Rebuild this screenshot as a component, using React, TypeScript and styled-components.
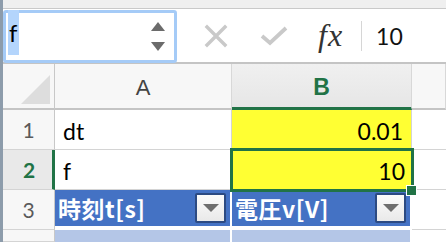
import React from "react";
import styled, { createGlobalStyle, css } from "styled-components";

const Global = createGlobalStyle`
  html, body { margin: 0; padding: 0; background: #ffffff; overflow: hidden; }
  body { font-family: Lato, "Noto Sans CJK JP", sans-serif; }
`;

const Window = styled.div`
  width: 443px;
  height: 242px;
  border-left: 3px solid #8d9cab;
  display: flex;
  flex-direction: column;
  overflow: hidden;
`;

const TopStrip = styled.div`
  height: 8px;
  flex: none;
  background: #efefef;
  border-bottom: 1px solid #c9c9c9;
`;

const FormulaBar = styled.div`
  height: 53px;
  flex: none;
  display: flex;
  align-items: center;
  background: #ffffff;
  border-bottom: 2px solid #c4c4c4;
`;

const NameBox = styled.div`
  box-sizing: border-box;
  width: 174px;
  height: 53px;
  margin-top: 1px;
  border: 3px solid #a5cbf7;
  border-radius: 3px;
  display: flex;
  align-items: stretch;
  background: #fff;
`;

const Selection = styled.span`
  margin-left: 2px;
  margin-top: -3px;
  padding: 0 2px 0 1px;
  background: #b4d5fc;
  font-family: Lato, sans-serif;
  font-size: 24px;
  color: #000;
  display: flex;
  align-items: center;
  height: 45px;
`;

const Spinner = styled.div`
  margin-left: auto;
  margin-right: 9px;
  display: flex;
  flex-direction: column;
  justify-content: center;
  gap: 11px;
`;

const Tri = styled.div<{ $down?: boolean }>`
  width: 0;
  height: 0;
  border-left: 7px solid transparent;
  border-right: 7px solid transparent;
  ${(p) =>
    p.$down
      ? css`border-top: 9px solid #6b6b6b;`
      : css`border-bottom: 9px solid #6b6b6b;`}
`;

const IconSlot = styled.div<{ $ml: number }>`
  margin-left: ${(p) => p.$ml}px;
  display: flex;
  align-items: center;
`;

const Fx = styled.span`
  margin-left: 29px;
  font-family: "Liberation Serif", "DejaVu Serif", serif;
  font-style: italic;
  font-size: 32px;
  line-height: 1;
  color: #333333;
  letter-spacing: 1px;
  margin-top: -2px;
`;

const Sep = styled.div`
  width: 1px;
  height: 30px;
  background: #d6d6d6;
  margin-left: 18px;
`;

const FormulaText = styled.span`
  margin-left: 14px;
  font-size: 23px;
  color: #111;
`;

const Sheet = styled.div`
  flex: 1;
  display: grid;
  grid-template-columns: 52px 177px 180px 1fr;
  grid-template-rows: 46px 40px 40px 40px 1fr;
`;

const Corner = styled.div`
  background: #f7f7f7;
  border-right: 1px solid #c8c8c8;
  border-bottom: 2px solid #c4c4c4;
  box-sizing: border-box;
  display: flex;
  align-items: flex-end;
  justify-content: flex-end;
  padding: 0 4px 4px 0;
`;

const CornerTri = styled.div`
  width: 0;
  height: 0;
  border-left: 29px solid transparent;
  border-bottom: 29px solid #dddddd;
`;

const ColHead = styled.div<{ $active?: boolean }>`
  box-sizing: border-box;
  display: flex;
  align-items: center;
  justify-content: center;
  font-family: "Liberation Sans", Arial, sans-serif;
  font-size: 22px;
  padding-top: 4px;
  border-right: 1px solid #d8d8d8;
  ${(p) =>
    p.$active
      ? css`
          background: linear-gradient(#f0f0f0, #e6e6e6);
          color: #217346;
          font-weight: bold;
          font-size: 23px;
          border-bottom: 3px solid #217346;
        `
      : css`
          background: #f7f7f7;
          color: #444;
          border-bottom: 2px solid #c4c4c4;
        `}
`;

const RowHead = styled.div<{ $active?: boolean }>`
  box-sizing: border-box;
  display: flex;
  align-items: center;
  justify-content: center;
  font-size: 21px;
  border-bottom: 1px solid #d4d4d4;
  ${(p) =>
    p.$active
      ? css`
          background: #e9e9e9;
          color: #217346;
          font-weight: bold;
          border-right: 3px solid #217346;
          padding-left: 3px;
        `
      : css`
          background: #f7f7f7;
          color: #5a5a5a;
          border-right: 1px solid #c8c8c8;
        `}
`;

const Cell = styled.div<{ $fill?: string; $align?: "left" | "right" }>`
  box-sizing: border-box;
  position: relative;
  display: flex;
  align-items: center;
  justify-content: ${(p) => (p.$align === "right" ? "flex-end" : "flex-start")};
  padding: 2px 8px 0 8px;
  font-size: 23px;
  color: #000;
  background: ${(p) => p.$fill ?? "#ffffff"};
  border-right: 1px solid #d4d4d4;
  border-bottom: 1px solid #d4d4d4;
`;

const ActiveCell = styled(Cell)`
  border: none;
  box-shadow: inset 0 0 0 1px #ffffff;
  outline: 3px solid #217346;
  outline-offset: -1px;
  padding-right: 7px;
  z-index: 1;
`;

const FillHandle = styled.div`
  position: absolute;
  right: -5px;
  bottom: -6px;
  width: 9px;
  height: 9px;
  background: #217346;
  border: 1px solid #ffffff;
`;

const HeaderCell = styled.div`
  box-sizing: border-box;
  display: flex;
  align-items: center;
  justify-content: space-between;
  background: #4472c4;
  color: #ffffff;
  font-family: "Noto Sans CJK JP", sans-serif;
  font-weight: bold;
  font-size: 23px;
  padding: 0 4px 0 3px;
  margin-right: 2px;
  border-bottom: 4px solid #ffffff;
  letter-spacing: 0.5px;
`;

const DropBtn = styled.div`
  box-sizing: border-box;
  width: 31px;
  height: 30px;
  background: linear-gradient(#fbfbfb, #e9e9e9);
  border: 2px solid #2c4a82;
  border-radius: 2px;
  display: flex;
  align-items: center;
  justify-content: center;
`;

const DropTri = styled.div`
  width: 0;
  height: 0;
  border-left: 8px solid transparent;
  border-right: 8px solid transparent;
  border-top: 8px solid #6e6e6e;
`;

const BandCell = styled.div<{ $fill: string }>`
  background: ${(p) => p.$fill};
  margin-right: 2px;
`;

const PlainRest = styled.div`
  border-bottom: 1px solid #d4d4d4;
  box-sizing: border-box;
`;

const XIcon = () => (
  <svg width="24" height="24" viewBox="0 0 24 24">
    <path d="M3 3 L21 21 M21 3 L3 21" stroke="#c9c9c9" strokeWidth="3.4" strokeLinecap="square" fill="none" />
  </svg>
);

const CheckIcon = () => (
  <svg width="30" height="22" viewBox="0 0 30 22">
    <path d="M3 11 L11 18 L27 3" stroke="#c9c9c9" strokeWidth="3.8" fill="none" />
  </svg>
);

export default function App() {
  return (
    <>
      <Global />
      <Window>
        <TopStrip />
        <FormulaBar>
          <NameBox>
            <Selection>f</Selection>
            <Spinner>
              <Tri />
              <Tri $down />
            </Spinner>
          </NameBox>
          <IconSlot $ml={27}>
            <XIcon />
          </IconSlot>
          <IconSlot $ml={31}>
            <CheckIcon />
          </IconSlot>
          <Fx>fx</Fx>
          <Sep />
          <FormulaText>10</FormulaText>
        </FormulaBar>
        <Sheet>
          <Corner>
            <CornerTri />
          </Corner>
          <ColHead>A</ColHead>
          <ColHead $active>B</ColHead>
          <ColHead />

          <RowHead>1</RowHead>
          <Cell>dt</Cell>
          <Cell $fill="#ffff33" $align="right">0.01</Cell>
          <PlainRest />

          <RowHead $active>2</RowHead>
          <Cell>f</Cell>
          <ActiveCell $fill="#ffff33" $align="right">
            10
            <FillHandle />
          </ActiveCell>
          <PlainRest />

          <RowHead>3</RowHead>
          <HeaderCell>
            <span>時刻t[s]</span>
            <DropBtn>
              <DropTri />
            </DropBtn>
          </HeaderCell>
          <HeaderCell>
            <span>電圧v[V]</span>
            <DropBtn>
              <DropTri />
            </DropBtn>
          </HeaderCell>
          <PlainRest />

          <RowHead />
          <BandCell $fill="#b4c6e7" />
          <BandCell $fill="#b4c6e7" />
          <div />
        </Sheet>
      </Window>
    </>
  );
}
